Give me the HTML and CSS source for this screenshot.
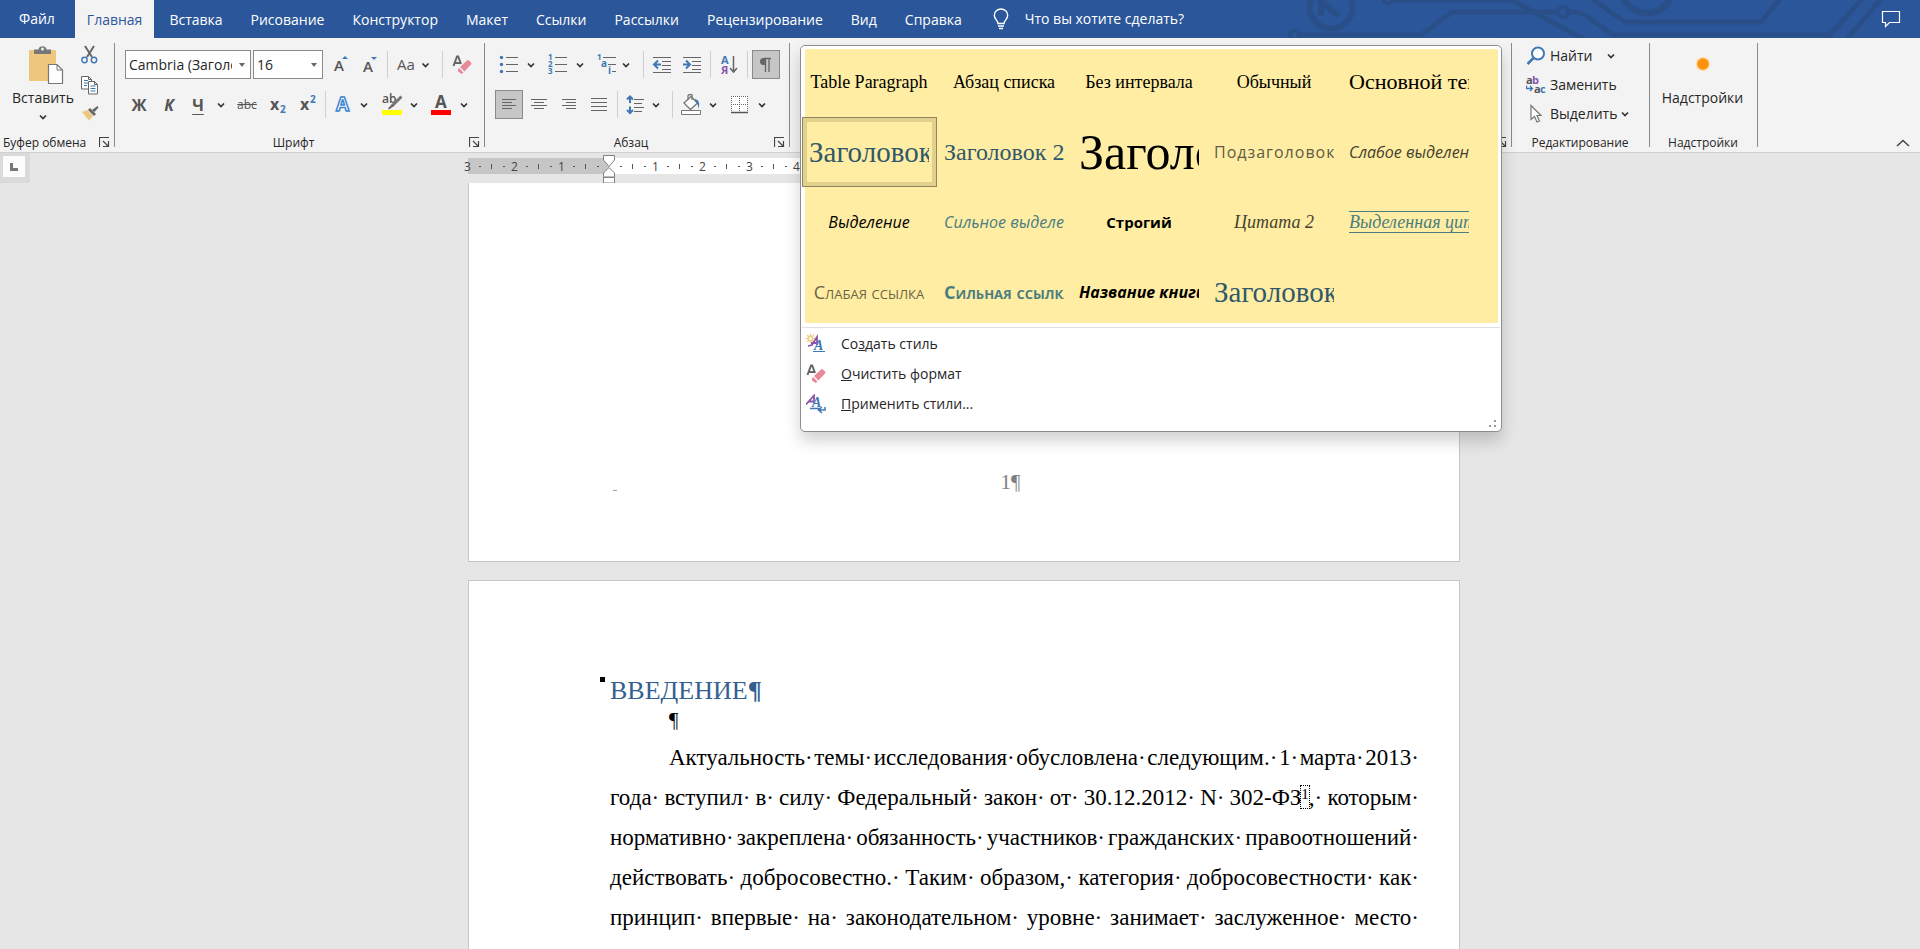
FILE: index.html
```html
<!DOCTYPE html>
<html lang="ru">
<head>
<meta charset="utf-8">
<title>Текстовый редактор</title>
<link rel="stylesheet" href="styles.css">
</head>
<body>
<svg width="0" height="0" class="defs" aria-hidden="true">
  <symbol id="chev" viewBox="0 0 16 28"><path d="M5 12.500l3 3 3-3" fill="none" stroke="#333" stroke-width="1.700"/></symbol>
  <symbol id="launch" viewBox="0 0 11 11"><path d="M.5 10V.5H10M4 4l5 5M9.500 4v5.500H4" fill="none" stroke="#444" stroke-width="1.200"/></symbol>
  <symbol id="eraser" viewBox="0 0 20 20">
    <path d="M1.500 11L5 1.500h1.200L9 9M2.800 8H8" fill="none" stroke="#666" stroke-width="2"/>
    <path d="M8 12l7-6.500q1-1 2 0l2 2q1 1 0 2l-6.500 7z" fill="#e8899a"/>
    <path d="M7 13l4.500 4.500-2 1.500-3.500-2.500v-2z" fill="#e8899a"/>
  </symbol>
</svg>

<header class="titlebar">
  <svg class="circuit" width="640" height="38" viewBox="1280 0 640 38" aria-hidden="true">
    <g fill="none" stroke="#2a4f88" stroke-width="5">
      <circle cx="1331" cy="7" r="21.500" stroke-width="6"/>
      <path d="M1321 0v16M1318 -1l21 17" stroke-width="6"/>
      <circle cx="1294.500" cy="35" r="4.500" stroke-width="4"/>
      <path d="M1300 35h121l31-23h105"/>
      <circle cx="1563" cy="12" r="5" stroke-width="4"/>
      <path d="M1569 12h6q6 0 14 6l24 17h217l33-37"/>
      <circle cx="1388" cy="-1" r="4.500" stroke-width="4"/>
      <path d="M1394 0h118l73 40"/>
      <path d="M1592 -1l33 23h136l19-23"/>
      <circle cx="1647" cy="-13" r="26" stroke-width="7"/>
      <path d="M1881 -1l-34 40"/>
    </g>
  </svg>
  <nav class="tabs">
    <button class="tab file">Файл</button>
    <button class="tab active">Главная</button>
    <button class="tab">Вставка</button>
    <button class="tab">Рисование</button>
    <button class="tab">Конструктор</button>
    <button class="tab">Макет</button>
    <button class="tab">Ссылки</button>
    <button class="tab">Рассылки</button>
    <button class="tab">Рецензирование</button>
    <button class="tab">Вид</button>
    <button class="tab">Справка</button>
  </nav>
  <label class="tellme">
    <svg width="16" height="22" viewBox="0 0 16 22" fill="none" stroke="#fff" stroke-width="1.400"><path d="M5 15.500c0-3-3.700-4-3.700-8.300a6.700 6.200 0 0 1 13.400 0c0 4.300-3.700 5.300-3.700 8.300zM5 18h6M6 20.500h4"/></svg>
    <input type="text" placeholder="Что вы хотите сделать?" aria-label="Что вы хотите сделать?">
  </label>
  <button class="comments" aria-label="Примечания">
    <svg width="20" height="18" viewBox="0 0 20 18"><path d="M1.500 1.500h17v11H8.500l-4 4v-4h-3z" fill="none" stroke="#fff" stroke-width="1.200"/></svg>
  </button>
</header>

<section class="ribbon">
  <div class="group clipboard">
    <div class="clip-body">
      <button class="paste">
        <svg width="36" height="40" viewBox="0 0 36 40">
          <path d="M1 5h27v31H1z" fill="#eec77c"/>
          <path d="M6 9V4.500h4.500C10.500 0 18.500 0 18.500 4.500H23V9z" fill="#777"/><circle cx="14.500" cy="4" r="1.500" fill="#f3f3f3"/>
          <path d="M20.500 19.500h8.500l5.500 5.500v13.500h-14z" fill="#fff" stroke="#777" stroke-width="1.200"/><path d="M29 19.500v5.500h5.500" fill="none" stroke="#777"/>
        </svg>
        <span>Вставить</span>
        <svg width="16" height="12" viewBox="0 8 16 12"><path d="M5 12.500l3 3 3-3" fill="none" stroke="#333" stroke-width="1.700"/></svg>
      </button>
      <div class="clip-tools">
        <button aria-label="Вырезать"><svg width="18" height="20" viewBox="0 0 18 20" fill="none"><path d="M4 1l7 11M13 1L6 12" stroke="#666" stroke-width="2"/><circle cx="3.500" cy="15" r="2.700" stroke="#3f78b5" stroke-width="1.400"/><circle cx="13" cy="15" r="2.700" stroke="#3f78b5" stroke-width="1.400"/></svg></button>
        <button aria-label="Копировать"><svg width="18" height="20" viewBox="0 0 18 20" fill="#fff" stroke="#666"><path d="M.5 1.500h7l3 3v9.500H.5zM7.500 1.500v3h3"/><path d="M3 5.500h4M3 8h4M3 10.500h3" stroke="#3f78b5"/><path d="M7.500 6.500h6l3 3v9.500h-9zM13.500 6.500v3h3"/><path d="M9.500 11h5M9.500 13.500h5M9.500 16h5" stroke="#3f78b5"/></svg></button>
        <button aria-label="Формат по образцу"><svg width="18" height="16" viewBox="0 0 18 16"><path d="M1 7l5-2 6 6-4 4.500z" fill="#eec77c"/><path d="M7 5l2-2 6 6-2 2z" fill="#666"/><path d="M11 5l5.500-4 1 1.500L13.500 7z" fill="#666"/></svg></button>
      </div>
    </div>
    <div class="caption"><span>Буфер обмена</span><button aria-label="Параметры буфера обмена"><svg width="11" height="11"><use href="#launch"/></svg></button></div>
  </div>

  <div class="group font">
    <div class="rows">
      <div class="row">
        <span class="combo name"><select aria-label="Шрифт"><option>Cambria (Заголовки)</option></select></span>
        <span class="combo size"><select aria-label="Размер шрифта"><option>16</option></select></span>
        <button aria-label="Увеличить размер"><svg width="30" height="28" viewBox="0 0 30 28"><text x="9" y="20" class="t15">A</text><path d="M17 8l3-3 3 3z" fill="#3f78b5"/></svg></button>
        <button aria-label="Уменьшить размер"><svg width="30" height="28" viewBox="0 0 30 28"><text x="8" y="21" class="t15">A</text><path d="M16 6l3 3 3-3z" fill="#3f78b5"/></svg></button>
        <i class="sep"></i>
        <button aria-label="Регистр"><svg width="50" height="28" viewBox="0 0 50 28"><text x="7" y="19" class="t15 light">Aa</text><path d="M32.500 12.500l3 3 3-3" class="cv"/></svg></button>
        <i class="sep"></i>
        <button aria-label="Удалить форматирование"><svg width="34" height="28" viewBox="0 0 34 28"><use href="#eraser" x="7" y="4" width="20" height="20"/></svg></button>
      </div>
      <div class="row second">
        <button class="w32 bold">Ж</button>
        <button class="w28 bold ital">К</button>
        <button class="w30 bold und">Ч</button>
        <button aria-label="Вид подчёркивания"><svg width="16" height="28"><use href="#chev"/></svg></button>
        <button class="w36 strike">abc</button>
        <button aria-label="Подстрочный"><svg width="28" height="28" viewBox="0 0 28 28"><text x="5" y="19" class="t16b">x</text><text x="15" y="22" class="t9b">2</text></svg></button>
        <button aria-label="Надстрочный"><svg width="30" height="28" viewBox="0 0 30 28"><text x="7" y="19" class="t16b">x</text><text x="17" y="12" class="t9b">2</text></svg></button>
        <i class="sep"></i>
        <button aria-label="Текстовые эффекты"><svg width="28" height="28" viewBox="0 0 28 28"><text x="8" y="20" class="fx">A</text></svg></button>
        <button aria-label="Виды эффектов"><svg width="16" height="28"><use href="#chev"/></svg></button>
        <button aria-label="Цвет выделения"><svg width="34" height="28" viewBox="0 0 34 28"><text x="10" y="12" class="t12b">ab</text><path d="M29.500 5.500l-9 9" stroke="#777" stroke-width="3"/><path d="M20 13l2 2-5 3.500-1-1z" fill="#666"/><path d="M10 19h20v5H10z" fill="#ff0"/></svg></button>
        <button aria-label="Выбор цвета выделения"><svg width="16" height="28"><use href="#chev"/></svg></button>
        <button aria-label="Цвет текста"><svg width="34" height="28" viewBox="0 0 34 28"><text x="13" y="17" class="t17b">A</text><path d="M9 19h20v5H9z" fill="#f00"/></svg></button>
        <button aria-label="Выбор цвета текста"><svg width="16" height="28"><use href="#chev"/></svg></button>
      </div>
    </div>
    <div class="caption"><span class="mid">Шрифт</span><button aria-label="Параметры шрифта"><svg width="11" height="11"><use href="#launch"/></svg></button></div>
  </div>

  <div class="group para">
    <div class="rows">
      <div class="row">
        <button aria-label="Маркеры"><svg width="28" height="28" viewBox="0 0 28 28"><path d="M11 6.500h12M11 13.500h12M11 20.500h12" class="ln"/><g fill="#3f78b5"><circle cx="6.500" cy="6.500" r="1.700"/><circle cx="6.500" cy="13.500" r="1.700"/><circle cx="6.500" cy="20.500" r="1.700"/></g></svg></button>
        <button aria-label="Виды маркеров"><svg width="17" height="28"><use href="#chev" width="16" height="28"/></svg></button>
        <button aria-label="Нумерация"><svg width="32" height="28" viewBox="0 0 32 28"><path d="M15 6.500h12M15 13.500h12M15 20.500h12" class="ln"/><text x="8" y="9" class="t7b">1</text><text x="8" y="16" class="t7b">2</text><text x="8" y="23" class="t7b">3</text></svg></button>
        <button aria-label="Виды нумерации"><svg width="16" height="28"><use href="#chev"/></svg></button>
        <button aria-label="Многоуровневый список"><svg width="30" height="28" viewBox="0 0 30 28"><path d="M15 6.500h13M20 13.500h8M24 20.500h4" class="ln"/><text x="9" y="9" class="t7b">1</text><text x="13" y="16" class="t9b">a</text><text x="20" y="23" class="t9b">i</text></svg></button>
        <button aria-label="Виды списков"><svg width="23" height="28" viewBox="0 0 23 28"><path d="M5 12.500l3 3 3-3" class="cv"/></svg></button>
        <i class="sep"></i>
        <button aria-label="Уменьшить отступ"><svg width="31" height="28" viewBox="0 0 31 28"><path d="M7 6.500h18M16 10.500h9M16 14.500h9M16 18.500h9M7 21.500h18" class="ln"/><path d="M15 13.500H8m4-4l-4 4 4 4" class="ar"/></svg></button>
        <button aria-label="Увеличить отступ"><svg width="31" height="28" viewBox="0 0 31 28"><path d="M6 6.500h18M15 10.500h9M15 14.500h9M15 18.500h9M6 21.500h18" class="ln"/><path d="M6 13.500h7m-4-4l4 4-4 4" class="ar"/></svg></button>
        <i class="sep"></i>
        <button aria-label="Сортировка"><svg width="32" height="28" viewBox="0 0 32 28"><text x="8" y="13" class="t11b blue">А</text><text x="8" y="23" class="t11b violet">Я</text><path d="M20.500 5v16m-3.500-4l3.500 4 3.500-4" fill="none" stroke="#666" stroke-width="1.500"/></svg></button>
        <i class="sep"></i>
        <button class="on pil" aria-label="Знаки абзаца"><svg width="28" height="28" viewBox="0 0 28 28"><path d="M12 7.500h7M13.500 7v14M17 7v14" fill="none" stroke="#666" stroke-width="1.300"/><path d="M13.500 7h-2a3.500 3.500 0 0 0 0 7h2z" fill="#666"/></svg></button>
      </div>
      <div class="row">
        <button class="on" aria-label="По левому краю"><svg width="28" height="28" viewBox="0 0 28 28"><path d="M7 8.500h14M7 11.500h10M7 14.500h14M7 17.500h10" class="ln"/></svg></button>
        <button aria-label="По центру"><svg width="32" height="28" viewBox="0 0 32 28"><path d="M8 8.500h16M11 11.500h10M8 14.500h16M11 17.500h10" class="ln"/></svg></button>
        <button aria-label="По правому краю"><svg width="30" height="28" viewBox="0 0 30 28"><path d="M7 8.500h14M11 11.500h10M7 14.500h14M11 17.500h10" class="ln"/></svg></button>
        <button aria-label="По ширине"><svg width="30" height="28" viewBox="0 0 30 28"><path d="M6 7.500h16M6 11.500h16M6 15.500h16M6 19.500h16" class="ln"/></svg></button>
        <i class="sep"></i>
        <button aria-label="Интервал"><svg width="28" height="28" viewBox="0 0 28 28"><path d="M14 8.500h10M14 12.500h8M14 16.500h10M14 20.500h8" class="ln"/><path d="M10 6v6m0 3.500v6M7 8.500l3-3 3 3M7 19l3 3 3-3" class="ar"/></svg></button>
        <button aria-label="Виды интервала"><svg width="22" height="28" viewBox="0 0 22 28"><path d="M5 12.500l3 3 3-3" class="cv"/></svg></button>
        <i class="sep"></i>
        <button aria-label="Заливка"><svg width="30" height="28" viewBox="0 0 30 28"><path d="M9 12l7-6.500 6.500 6.500-7 6.500z" fill="#fff" stroke="#777" stroke-width="1.300"/><path d="M13 9V5q0-1.500 2.500-1.500T17 5v4" fill="none" stroke="#777" stroke-width="1.300"/><path d="M20 8q6 1 3.500 10 -.5-6-3.500-8z" fill="#3f78b5"/><path d="M6.500 19.500h19v4h-19z" fill="#fff" stroke="#777"/></svg></button>
        <button aria-label="Выбор заливки"><svg width="17" height="28"><use href="#chev" width="16" height="28"/></svg></button>
        <button aria-label="Границы"><svg width="32" height="28" viewBox="0 0 32 28"><path d="M9 5h17v17H9z" fill="#fff"/><path d="M9 5.500h17M9 13.500h17M9.500 5v16M17.500 5v16M25.500 5v16" fill="none" stroke="#666" stroke-dasharray="1 1"/><path d="M9 21.500h17" stroke="#555" stroke-width="1.500"/></svg></button>
        <button aria-label="Виды границ"><svg width="16" height="28"><use href="#chev"/></svg></button>
      </div>
    </div>
    <div class="caption"><span class="mid">Абзац</span><button aria-label="Параметры абзаца"><svg width="11" height="11"><use href="#launch"/></svg></button></div>
  </div>

  <div class="group styles">
    <div class="caption"><button aria-label="Область стилей"><svg width="11" height="11"><use href="#launch"/></svg></button></div>
    <div class="popup">
      <div class="gallery">
        <div class="grid">
          <button class="st serif"><span>Table Paragraph</span></button>
          <button class="st serif"><span>Абзац списка</span></button>
          <button class="st serif"><span>Без интервала</span></button>
          <button class="st serif"><span>Обычный</span></button>
          <button class="st serif body-text"><span>Основной текст</span></button>
          <button class="st h1 selected"><span>Заголовок 1</span></button>
          <button class="st h2"><span>Заголовок 2</span></button>
          <button class="st title"><span>Заголовок</span></button>
          <button class="st sub"><span>Подзаголовок</span></button>
          <button class="st weak"><span>Слабое выделение</span></button>
          <button class="st emph"><span>Выделение</span></button>
          <button class="st strong-emph"><span>Сильное выделение</span></button>
          <button class="st strong"><span>Строгий</span></button>
          <button class="st quote"><span>Цитата 2</span></button>
          <button class="st iquote"><span>Выделенная цитата</span></button>
          <button class="st ref"><span>Слабая ссылка</span></button>
          <button class="st ref iref"><span>Сильная ссылка</span></button>
          <button class="st book"><span>Название книги</span></button>
          <button class="st h1"><span>Заголовок оглавления</span></button>
        </div>
      </div>
      <div class="menu">
        <button><svg width="20" height="20" viewBox="0 0 20 20"><path d="M4.500 0v9M0 4.500h9M1.300 1.300l6.400 6.400M7.700 1.300L1.300 7.700" stroke="#eec77c" stroke-width="1.500"/><circle cx="4.500" cy="4.500" r="1.500" fill="#fff"/><path d="M2 12l4-1 5-8v8M5 9h6" fill="none" stroke="#8a56ae" stroke-width="1.800"/><text x="8" y="16" class="sa">A</text><path d="M7 17.500h12" stroke="#3f78b5"/></svg><span>Со<u>з</u>дать стиль</span></button>
        <button><svg width="20" height="20"><use href="#eraser"/></svg><span><u>О</u>чистить формат</span></button>
        <button><svg width="20" height="20" viewBox="0 0 20 20"><path d="M0 10.500L8 1.500v8M3 7.500h5" fill="none" stroke="#8a56ae" stroke-width="1.800"/><text x="6" y="13" class="sa">A</text><path d="M4 14.500h11M19 13v3h-6m3-3l-3.500 3 3.500 3" fill="none" stroke="#3f78b5" stroke-width="1.500"/></svg><span><u>П</u>рименить стили...</span></button>
      </div>
      <svg class="grip" width="8" height="8" viewBox="0 0 8 8"><path d="M5 0h2v2H5zM0 5h2v2H0zM5 5h2v2H5z" fill="#999"/></svg>
    </div>
  </div>

  <div class="group edit">
    <div class="edit-list">
      <button><svg width="20" height="20" viewBox="0 0 20 20" fill="none" stroke="#3f78b5"><circle cx="12" cy="7.500" r="6" fill="#fff" stroke-width="2"/><path d="M7.500 12l-6 6" stroke-width="2.500"/></svg><span>Найти</span><svg class="far" width="16" height="28"><use href="#chev"/></svg></button>
      <button><svg width="20" height="20" viewBox="0 0 20 20"><text x="0" y="9" class="t11b">a</text><text x="6" y="9" class="t11b violet">b</text><text x="8" y="18" class="t11b">a</text><text x="14" y="18" class="t11b blue">c</text><path d="M.5 10.500v3h6m-2.500-2.500l2.500 2.500-2.500 2.500" fill="none" stroke="#3f78b5" stroke-width="1.300"/></svg><span>Заменить</span></button>
      <button><svg width="20" height="20" viewBox="0 0 20 20"><path d="M5 1.500v14l3.500-3 2.500 5.500 2.500-1-2.500-5.500h4z" fill="#fff" stroke="#777" stroke-width="1.200"/></svg><span>Выделить</span><svg width="16" height="28"><use href="#chev"/></svg></button>
    </div>
    <div class="caption"><span class="mid">Редактирование</span></div>
  </div>

  <div class="group addins">
    <button class="addin"><svg width="16" height="16" viewBox="0 0 16 16"><circle cx="8" cy="8" r="7" fill="#ffd9a0"/><circle cx="8" cy="8" r="5.800" fill="#ff9310"/></svg><span>Надстройки</span></button>
    <div class="caption"><span class="mid">Надстройки</span></div>
  </div>
  <button class="collapse" aria-label="Свернуть ленту"><svg width="14" height="8" viewBox="0 0 14 8"><path d="M1 7l6-5.500L13 7" fill="none" stroke="#444" stroke-width="1.500"/></svg></button>
</section>

<div class="ruler-row">
  <div class="corner"><button aria-label="Табуляция"><svg width="8" height="8" viewBox="0 0 8 8"><path d="M1.500 0v6.500H8" fill="none" stroke="#777" stroke-width="3"/></svg></button></div>
  <div class="ruler-wrap">
    <div class="ruler">
      <ul class="margin"><li>3</li><li>2</li><li>1</li></ul>
      <ul class="scale"><li></li><li>1</li><li>2</li><li>3</li><li>4</li></ul>
      <svg class="indent" width="12" height="29" viewBox="0 0 12 29" fill="#fff" stroke="#808080"><path d="M.5.500h11v4.500L6 11.500.5 5zM6 12.500l5.500 5.500v4H.5v-4zM.5 22.500h11v5.500H.5z"/></svg>
    </div>
  </div>
</div>

<main class="canvas">
  <article class="page first">
    <i class="tiny"></i>
    <p class="pageno">1¶</p>
  </article>
  <article class="page">
    <h1>ВВЕДЕНИЕ<b>¶</b></h1>
    <p class="empty">¶</p>
    <div class="text">
      <p class="line start"><span>Актуальность·</span> <span>темы·</span> <span>исследования·</span> <span>обусловлена·</span> <span>следующим.·</span> <span>1·</span> <span>марта·</span> <span>2013·</span></p>
      <p class="line"><span>года·</span> <span>вступил·</span> <span>в·</span> <span>силу·</span> <span>Федеральный·</span> <span>закон·</span> <span>от·</span> <span>30.12.2012·</span> <span>N·</span> <span>302-ФЗ<a class="note" href="#note1">1</a>,·</span> <span>которым·</span></p>
      <p class="line"><span>нормативно·</span> <span>закреплена·</span> <span>обязанность·</span> <span>участников·</span> <span>гражданских·</span> <span>правоотношений·</span></p>
      <p class="line"><span>действовать·</span> <span>добросовестно.·</span> <span>Таким·</span> <span>образом,·</span> <span>категория·</span> <span>добросовестности·</span> <span>как·</span></p>
      <p class="line"><span>принцип·</span> <span>впервые·</span> <span>на·</span> <span>законодательном·</span> <span>уровне·</span> <span>занимает·</span> <span>заслуженное·</span> <span>место·</span></p>
    </div>
  </article>
</main>
</body>
</html>
```
FILE: styles.css
```css
* { box-sizing: border-box; }

body {
  margin: 0;
  height: 100vh;
  display: flex;
  flex-direction: column;
  overflow: hidden;
  background: #e6e6e6;
  color: #262626;
  font: 14px/20px "Open Sans", "Noto Sans", sans-serif;
}

button, input, select { font: inherit; color: inherit; margin: 0; padding: 0; border: 0; background: none; }
svg { display: block; flex: none; }
.defs { position: absolute; }
p, h1, ul { margin: 0; padding: 0; font-weight: normal; list-style: none; }

/* Title bar */
.titlebar { position: relative; display: flex; flex: none; height: 38px; background: #2b579a; color: #fff; }
.circuit { position: absolute; top: 0; right: 0; }
.tabs { display: flex; gap: 2px; }
.tab { padding: 2px 13px 0; }
.tab.file { padding: 0 18px 0 19px; }
.tab.active { background: #f3f3f3; color: #2b579a; padding: 2px 12px 0; }
.tellme { display: flex; align-items: center; gap: 16px; margin-left: 18px; }
.tellme input { width: 180px; outline: 0; }
.tellme input::placeholder { color: #fff; opacity: 1; }
.comments { position: relative; margin-left: auto; padding-right: 19px; }

/* Ribbon */
.ribbon { display: flex; flex: none; height: 115px; padding: 5px 0; background: #f3f3f3; border-bottom: 1px solid #d0d0d0; }
.group { display: flex; flex-direction: column; flex: none; justify-content: space-between; border-right: 1px solid #8a8a8a; }
.clipboard { width: 115px; }
.font { width: 370px; }
.para { width: 305px; }
.styles { width: 722px; position: relative; justify-content: flex-end; }
.edit { width: 138px; }
.addins { width: 108px; }
.caption { display: flex; align-items: center; justify-content: space-between; height: 10px; padding: 0 4px 0 3px; font-size: 12px; }
.caption span { padding-top: 2px; }
.caption button { margin-left: auto; }
.caption .mid { flex: 1; text-align: center; }

.clip-body { display: flex; gap: 4px; padding: 2px 0 0 9px; }
.paste { display: flex; flex-direction: column; align-items: center; width: 68px; gap: 3px; }
.paste svg:first-child { margin-left: 6px; }
.clip-tools { display: flex; flex-direction: column; gap: 10px; }

.rows { display: flex; flex-direction: column; gap: 11px; padding: 7px 0 0 10px; }
.row { display: flex; align-items: center; height: 29px; }
.row.second { margin-left: -2px; }
.row button { flex: none; height: 29px; color: #555; }
.sep { flex: none; width: 1px; height: 27px; margin: 0 2px; background: #d0d0d0; }
.w28 { width: 28px; }
.w30 { width: 30px; }
.w32 { width: 32px; }
.w36 { width: 36px; }
.bold { font-size: 16px; font-weight: 700; }
.ital { font-style: italic; }
.und { text-decoration: underline; text-underline-offset: 3px; }
.strike { font-size: 12px; text-decoration: line-through; }
.row .on { background: #c6c6c6; outline: 1px solid #8a8a8a; outline-offset: -1px; }
.pil { margin-left: 2px; }

.combo { position: relative; height: 29px; background: #fff; border: 1px solid #8a8a8a; }
.combo select { appearance: none; width: 100%; height: 27px; padding: 0 18px 0 3px; outline: 0; text-overflow: clip; }
.combo::after { content: ""; position: absolute; right: 5px; top: 12px; border: 3px solid transparent; border-top: 4px solid #666; border-bottom: 0; }
.combo.name { width: 126px; }
.combo.size { width: 70px; margin: 0 2px; }

svg text { font-family: "Open Sans", sans-serif; fill: #555; }
.t15 { font-size: 15px; font-weight: 600; }
.t15.light { font-weight: 400; }
.t16b { font-size: 16px; font-weight: 700; }
.t17b { font-size: 17px; font-weight: 700; }
.t12b { font-size: 12px; font-weight: 600; }
.t11b { font-size: 11px; font-weight: 700; }
svg .t9b { font-size: 10px; font-weight: 700; fill: #3f78b5; }
svg .t7b { font-size: 8px; font-weight: 700; fill: #3f78b5; }
svg .fx { font-size: 19px; font-weight: 700; fill: #fff; stroke: #3f85d0; stroke-width: 1.5px; }
svg .sa { font: italic 700 14px "Liberation Serif", serif; fill: #3f78b5; }
svg .blue { fill: #3f78b5; }
svg .violet { fill: #8a56ae; }
.ln { fill: none; stroke: #666; stroke-width: 1px; }
.ar { fill: none; stroke: #3f78b5; stroke-width: 2px; }
.cv { fill: none; stroke: #333; stroke-width: 1.7px; }

.edit-list { display: flex; flex-direction: column; margin-top: -2px; padding-left: 14px; }
.edit-list button { display: flex; align-items: center; gap: 4px; height: 29px; }
.edit-list svg + span + svg { margin-left: -4px; }
.edit-list svg + span + .far { margin-left: 6px; }
.addin { display: flex; flex-direction: column; align-items: center; gap: 16px; padding: 13px 2px 0 0; }
.collapse { align-self: flex-end; margin-left: auto; padding: 0 10px 0 0; }

/* Styles gallery */
.popup {
  position: absolute; z-index: 2; left: 10px; top: 2px; width: 702px;
  background: #fff; border: 1px solid #8c8c8c; border-radius: 5px;
  box-shadow: 0 9px 16px rgba(0, 0, 0, .18);
}
.gallery { background: #ffeda3; border: solid #fff; border-width: 3px 3px 4px 4px; border-radius: 5px 5px 0 0; }
.grid { display: grid; grid-template-columns: repeat(5, 135px); grid-auto-rows: 70px; margin: -2px 0 -4px -3px; }
.st { display: flex; align-items: center; padding: 0 8px 0 7px; font-size: 16px; line-height: 60px; color: #000; }
.st span { flex: 1; overflow: hidden; white-space: nowrap; text-align: center; }
.st.selected { box-shadow: inset 0 0 0 1px #8f8560, inset 0 0 0 5px #e2d08d; }
.serif { font-family: "Liberation Serif", serif; font-size: 18px; }
.body-text { font-size: 22px; }
.body-text span, .h1 span, .h2 span, .title span, .sub span, .weak span, .strong-emph span, .iquote span, .iref span, .book span { text-align: left; }
.h1 { font-family: "Liberation Serif", serif; font-size: 29px; color: #30586a; }
.h2 { font-family: "Liberation Serif", serif; font-size: 24px; color: #30586a; }
.title { font-family: "Liberation Serif", serif; font-size: 50px; }
.sub { color: #5f5a45; letter-spacing: 1px; }
.weak { font-style: italic; color: #45412f; }
.emph { font-style: italic; }
.strong-emph { font-style: italic; color: #4b7d80; }
.strong { font-size: 15px; font-weight: 700; }
.quote { font: italic 18px "Liberation Serif", serif; color: #45412f; }
.iquote { font: italic 18px/20px "Liberation Serif", serif; color: #4b7d80; }
.iquote span { border: solid #4b7d80; border-width: 1px 0; }
.ref { font-size: 18px; font-variant: small-caps; color: #6b6443; }
.iref { font-weight: 700; color: #4b7d80; }
.book { font-style: italic; font-weight: 700; }

.menu { border-top: 1px solid #e1e1e1; margin: 0 1px; padding: 1px 0 12px; }
.menu button { display: flex; align-items: center; width: 100%; height: 30px; padding-left: 4px; gap: 15px; }
.grip { position: absolute; right: 4px; bottom: 3px; }

/* Ruler */
.ruler-row { display: flex; flex: none; height: 30px; }
.corner { width: 30px; padding: 3px; background: #dadada; }
.corner button { display: flex; align-items: center; justify-content: center; width: 22px; height: 21px; background: #fcfcfc; }
.ruler-wrap { flex: 1; display: flex; justify-content: center; padding: 5px 22px 0 0; }
.ruler { position: relative; display: flex; width: 992px; height: 16px; color: #444; font-size: 12px; line-height: 18px; }
.ruler ul { display: flex; }
.margin { background: #c6c6c6; }
.scale { flex: 1; background: #fff; }
.ruler li {
  width: 47px; text-indent: -4px;
  background:
    linear-gradient(#555, #555) 11px 8px / 2px 1px no-repeat,
    linear-gradient(#555, #555) 23px 6px / 1px 5px no-repeat,
    linear-gradient(#555, #555) 35px 8px / 2px 1px no-repeat;
}
.indent { position: absolute; left: 135px; top: -3px; }

/* Document */
.canvas { flex: 1; min-height: 0; overflow: hidden; display: flex; flex-direction: column; align-items: center; gap: 18px; padding-left: 8px; }
.page { position: relative; flex: none; width: 992px; padding: 92px 40px 60px 141px; background: #fff; border: 1px solid #c6c6c6; font-family: "Liberation Serif", serif; color: #000; }
.page.first { border-top: 0; padding: 286px 40px 66px 141px; }
.pageno { text-align: center; font-size: 21px; line-height: 26px; color: #808080; margin-right: 8px; }
.tiny { position: absolute; left: 144px; top: 307px; width: 4px; height: 1px; background: #a0a0a0; }
.page h1 { font-size: 26px; line-height: 36px; color: #365f91; }
.page h1::before { content: ""; position: absolute; left: 131px; top: 96px; width: 5px; height: 5px; background: #000; }
.empty { padding-left: 59px; font-size: 21px; line-height: 22px; }
.text { padding-top: 7px; font-size: 23px; line-height: 40px; }
.line { display: flex; justify-content: space-between; white-space: nowrap; }
.line.start { padding-left: 59px; }
.note { padding-bottom: 6px; font-size: 15px; line-height: 16px; color: inherit; text-decoration: none; vertical-align: 6px; outline: 1px dotted #000; }
```
